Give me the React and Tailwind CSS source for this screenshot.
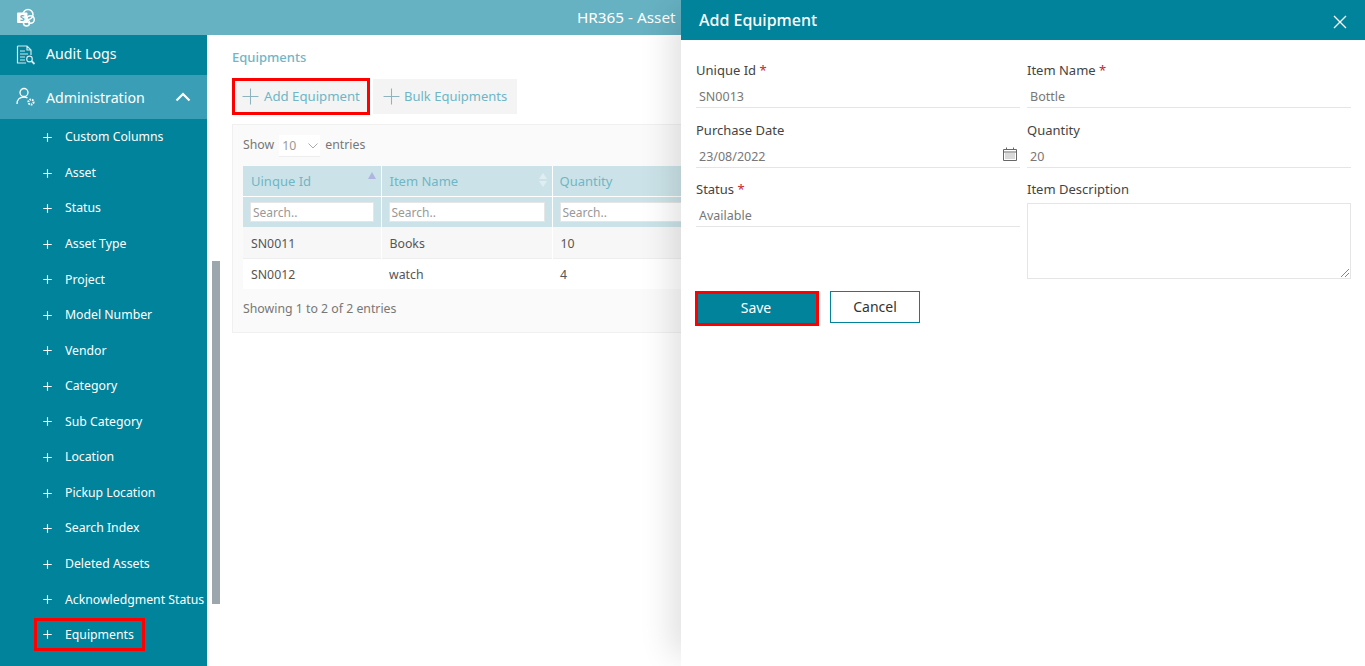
import React from 'react';

const menuItems = [
  'Custom Columns', 'Asset', 'Status', 'Asset Type', 'Project', 'Model Number', 'Vendor', 'Category',
  'Sub Category', 'Location', 'Pickup Location', 'Search Index', 'Deleted Assets', 'Acknowledgment Status',
];

const Plus = ({ className, strokeWidth = 1 }) => (
  <svg viewBox="0 0 16 16" className={className} fill="none" stroke="currentColor" strokeWidth={strokeWidth}>
    <path d="M8 0.5V15.5M0.5 8H15.5" />
  </svg>
);

const Star = () => <span className="text-[#c4262e]"> *</span>;

const Field = ({ label, required, value, tall, children }) => (
  <div className={tall ? 'h-[60px]' : 'h-[59px]'}>
    <div className="h-[21px] pt-px leading-[19px] text-[#444]">{label}{required && <Star />}</div>
    <div className="relative mt-[4px] h-[23px] border-b border-[#e3e5e6] pl-[3px] text-[12.5px] leading-[24px] text-[#777]">
      {value}
      {children}
    </div>
  </div>
);

const CalendarIcon = () => (
  <svg viewBox="0 0 14 14" className="absolute right-[3px] top-[2px] h-[14px] w-[14px]" fill="none" stroke="#666" strokeWidth="1">
    <path d="M0.5 2.5H13.5V13.5H0.5ZM0.5 5H13.5M3.5 0.5V3M10.5 0.5V3" />
    <path d="M2.5 7H11.5M2.5 9H11.5M2.5 11H11.5" strokeDasharray="1 1" />
  </svg>
);

export default function App() {
  return (
    <div className="relative h-[666px] w-[1365px] overflow-hidden bg-white font-['Noto_Sans','Open_Sans',sans-serif] text-[13px]">
      {/* top bar */}
      <div className="flex h-[35px] items-center bg-[#66b1c2] text-white">
        <svg viewBox="0 0 20 20" className="ml-[16px] h-[20px] w-[20px]">
          <circle cx="12" cy="6.5" r="5" fill="none" stroke="#fff" strokeWidth="1.5" />
          <circle cx="14.5" cy="11.5" r="3.8" fill="none" stroke="#fff" strokeWidth="1.5" />
          <circle cx="10.5" cy="15" r="3" fill="none" stroke="#fff" strokeWidth="1.5" />
          <rect x="1" y="4.5" width="10.5" height="10.5" rx="1" fill="#fff" />
          <text x="6.2" y="13" textAnchor="middle" fontSize="9" fontWeight="700" fill="#66b1c2">S</text>
        </svg>
        <span className="ml-[541px] text-[15.3px]">HR365 - Asset</span>
      </div>

      <div className="flex h-[631px]">
        {/* sidebar */}
        <aside className="w-[207px] shrink-0 bg-[#00839b] text-white">
          <div className="flex h-[40px] items-center pl-[16px] text-[14.2px]">
            <svg viewBox="0 0 20 20" className="h-[20px] w-[20px]" fill="none" stroke="#d5e9ee" strokeWidth="1.2">
              <path d="M1.5 1H11L15 5V10M1.5 1V18H10M11 1V5H15M4 6H9M4 9H12M4 12H9M4 15H9" />
              <circle cx="13.5" cy="14" r="2.8" />
              <path d="M15.5 16L18.5 19" strokeWidth="1.8" />
            </svg>
            <span className="mb-[3px] ml-[10px]">Audit Logs</span>
          </div>
          <div className="flex h-[44px] items-center bg-[#3a9fb6] pl-[16px] pr-[16px] text-[14.2px]">
            <svg viewBox="0 0 20 20" className="h-[20px] w-[20px]" fill="none" stroke="#fff" strokeWidth="1.3">
              <circle cx="8" cy="5.5" r="4" />
              <path d="M1 17C1 12.5 4 10 8 10C9.5 10 10.5 10.3 11.5 11" />
              <circle cx="15" cy="15" r="2.6" strokeWidth="2" strokeDasharray="1.6 1" />
            </svg>
            <span className="ml-[10px] flex-1 pt-[2px]">Administration</span>
            <svg viewBox="0 0 16 10" className="h-[10px] w-[16px]" fill="none" stroke="#fff" strokeWidth="2.2">
              <path d="M1.5 8.5L8 2L14.5 8.5" />
            </svg>
          </div>
          {menuItems.map((item) => (
            <div key={item} className="flex h-[35.57px] items-center pl-[43px] pt-[1.4px] text-[12.25px]">
              <Plus className="h-[9px] w-[9px] shrink-0" strokeWidth={2} />
              <span className="ml-[13px] whitespace-nowrap">{item}</span>
            </div>
          ))}
          <div className="ml-[34px] mt-[1px] flex h-[33px] w-[111px] items-center border-[3px] border-[#f00] pl-[6px] text-[12.25px]">
            <Plus className="h-[9px] w-[9px] shrink-0" strokeWidth={2} />
            <span className="ml-[13px] pt-[2px]">Equipments</span>
          </div>
        </aside>

        {/* page content */}
        <main className="relative flex-1 pl-[25px] pt-[13px]">
          <div className="absolute left-[5px] top-[226px] h-[343px] w-[8px] bg-[#9ca6ad]" />
          <div className="h-[20px] text-[13px] font-medium leading-[18px] text-[#6fb6c6]">Equipments</div>
          <div className="mt-[10px] flex items-center">
            <button className="flex h-[37px] w-[138px] items-center border-[3px] border-[#f00] bg-[#f4f4f4] pl-[7px] text-[13.2px] text-[#6fb6c6]">
              <Plus className="h-[17px] w-[17px] text-[#8fb4bf]" />
              <span className="ml-[5px]">Add Equipment</span>
            </button>
            <button className="ml-[3px] flex h-[35px] w-[144px] items-center bg-[#f4f4f4] pl-[10px] text-[13px] text-[#6fb6c6]">
              <Plus className="h-[17px] w-[17px] text-[#8fb4bf]" />
              <span className="ml-[4px]">Bulk Equipments</span>
            </button>
          </div>

          <div className="mt-[9px] h-[209px] w-[1110px] border border-[#f0f0f0] bg-[#fafafa] px-[10px] pt-[10px] text-[12.3px] text-[#777]">
            <div className="flex h-[22px] items-center">
              <span className="mb-[2px]">Show</span>
              <div className="ml-[5px] flex h-[22px] w-[41px] items-center justify-between border-b border-[#eee] bg-white pl-[3px] pr-[2px] text-[#999]">
                <span className="pt-[2px]">10</span>
                <svg viewBox="0 0 10 6" className="h-[6px] w-[10px]" fill="none" stroke="#aaa"><path d="M0.5 0.5L5 5L9.5 0.5" /></svg>
              </div>
              <span className="mb-[2px] ml-[5px]">entries</span>
            </div>
            <table className="mt-[9px] w-[900px] table-fixed border-collapse">
              <thead className="bg-[#cbe3e8] text-[#6fb6c6]">
                <tr className="h-[30px] border-b border-white text-left text-[13px] font-normal">
                  <th className="relative w-[138px] border-r border-white pl-[8px] pt-[2px] font-normal">
                    Uinque Id
                    <span className="absolute right-[5px] top-[6px] h-0 w-0 border-x-[4px] border-b-[7px] border-x-transparent border-b-[#adb5e0]" />
                  </th>
                  <th className="relative w-[171px] border-r border-white pl-[8px] pt-[2px] font-normal">
                    Item Name
                    <span className="absolute right-[5px] top-[7px] h-0 w-0 border-x-[4px] border-b-[6px] border-x-transparent border-b-[#e0eef1]" />
                    <span className="absolute right-[5px] top-[15px] h-0 w-0 border-x-[4px] border-t-[6px] border-x-transparent border-t-[#e0eef1]" />
                  </th>
                  <th className="pl-[7px] pt-[2px] font-normal">Quantity</th>
                </tr>
                <tr className="h-[31px]">
                  <td className="border-r border-white pl-[7px] pt-px"><div className="h-[20px] w-[124px] border border-[#e6e6e6] bg-white pl-[2px] text-[12px] leading-[20px] text-[#999]">Search..</div></td>
                  <td className="border-r border-white pl-[7px] pt-px"><div className="h-[20px] w-[156px] border border-[#e6e6e6] bg-white pl-[2px] text-[12px] leading-[20px] text-[#999]">Search..</div></td>
                  <td className="pl-[7px] pt-px"><div className="h-[20px] w-[156px] border border-[#e6e6e6] bg-white pl-[2px] text-[12px] leading-[20px] text-[#999]">Search..</div></td>
                </tr>
              </thead>
              <tbody className="text-[12.3px] text-[#555]">
                <tr className="h-[31px] border-b border-[#eee] bg-[#f7f7f7]">
                  <td className="border-r border-white pl-[8px] pt-[4px]">SN0011</td>
                  <td className="border-r border-white pl-[8px] pt-[4px]">Books</td>
                  <td className="pl-[8px] pt-[4px]">10</td>
                </tr>
                <tr className="h-[31px] bg-white">
                  <td className="pl-[8px] pt-[2px]">SN0012</td>
                  <td className="pl-[8px] pt-[2px]">watch</td>
                  <td className="pl-[8px] pt-[2px]">4</td>
                </tr>
              </tbody>
            </table>
            <div className="mt-[11px]">Showing 1 to 2 of 2 entries</div>
          </div>
        </main>
      </div>

      {/* add equipment panel */}
      <div className="absolute inset-y-0 right-0 w-[684px] bg-white shadow-[-20px_0_30px_-10px_rgba(0,0,0,0.12)]">
        <div className="flex h-[40px] items-center justify-between bg-[#00839b] pl-[18px] pr-[18px] text-white">
          <span className="text-[16px] font-medium">Add Equipment</span>
          <svg viewBox="0 0 14 14" className="mt-[4px] h-[14px] w-[14px]" fill="none" stroke="#fff" strokeWidth="1.3">
            <path d="M1 1L13 13M13 1L1 13" />
          </svg>
        </div>
        <div className="pl-[15px] pt-[20px]">
          <div className="grid w-[655px] grid-cols-2 gap-x-[7px] text-[13px]">
            <Field label="Unique Id" required value="SN0013" tall />
            <Field label="Item Name" required value="Bottle" tall />
            <Field label="Purchase Date" value="23/08/2022"><CalendarIcon /></Field>
            <Field label="Quantity" value="20" />
            <Field label="Status" required value="Available" />
            <div>
              <div className="h-[21px] pt-px leading-[19px] text-[#444]">Item Description</div>
              <div className="relative mt-[3px] h-[76px] border border-[#e3e5e6]">
                <svg viewBox="0 0 8 8" className="absolute bottom-[1px] right-[1px] h-[8px] w-[8px]" stroke="#666" strokeWidth="0.8">
                  <path d="M0 8L8 0M4 8L8 4" />
                </svg>
              </div>
            </div>
          </div>
          <div className="ml-[-1px] mt-[12px] flex items-start">
            <button className="h-[35px] w-[124px] border-[3px] border-[#f00] bg-[#00839b] pb-[2px] pr-[2px] text-[14px] text-white">Save</button>
            <button className="ml-[11px] h-[32px] w-[90px] border border-[#00839b] bg-white pb-[2px] text-[14px] text-[#333]">Cancel</button>
          </div>
        </div>
      </div>
    </div>
  );
}
